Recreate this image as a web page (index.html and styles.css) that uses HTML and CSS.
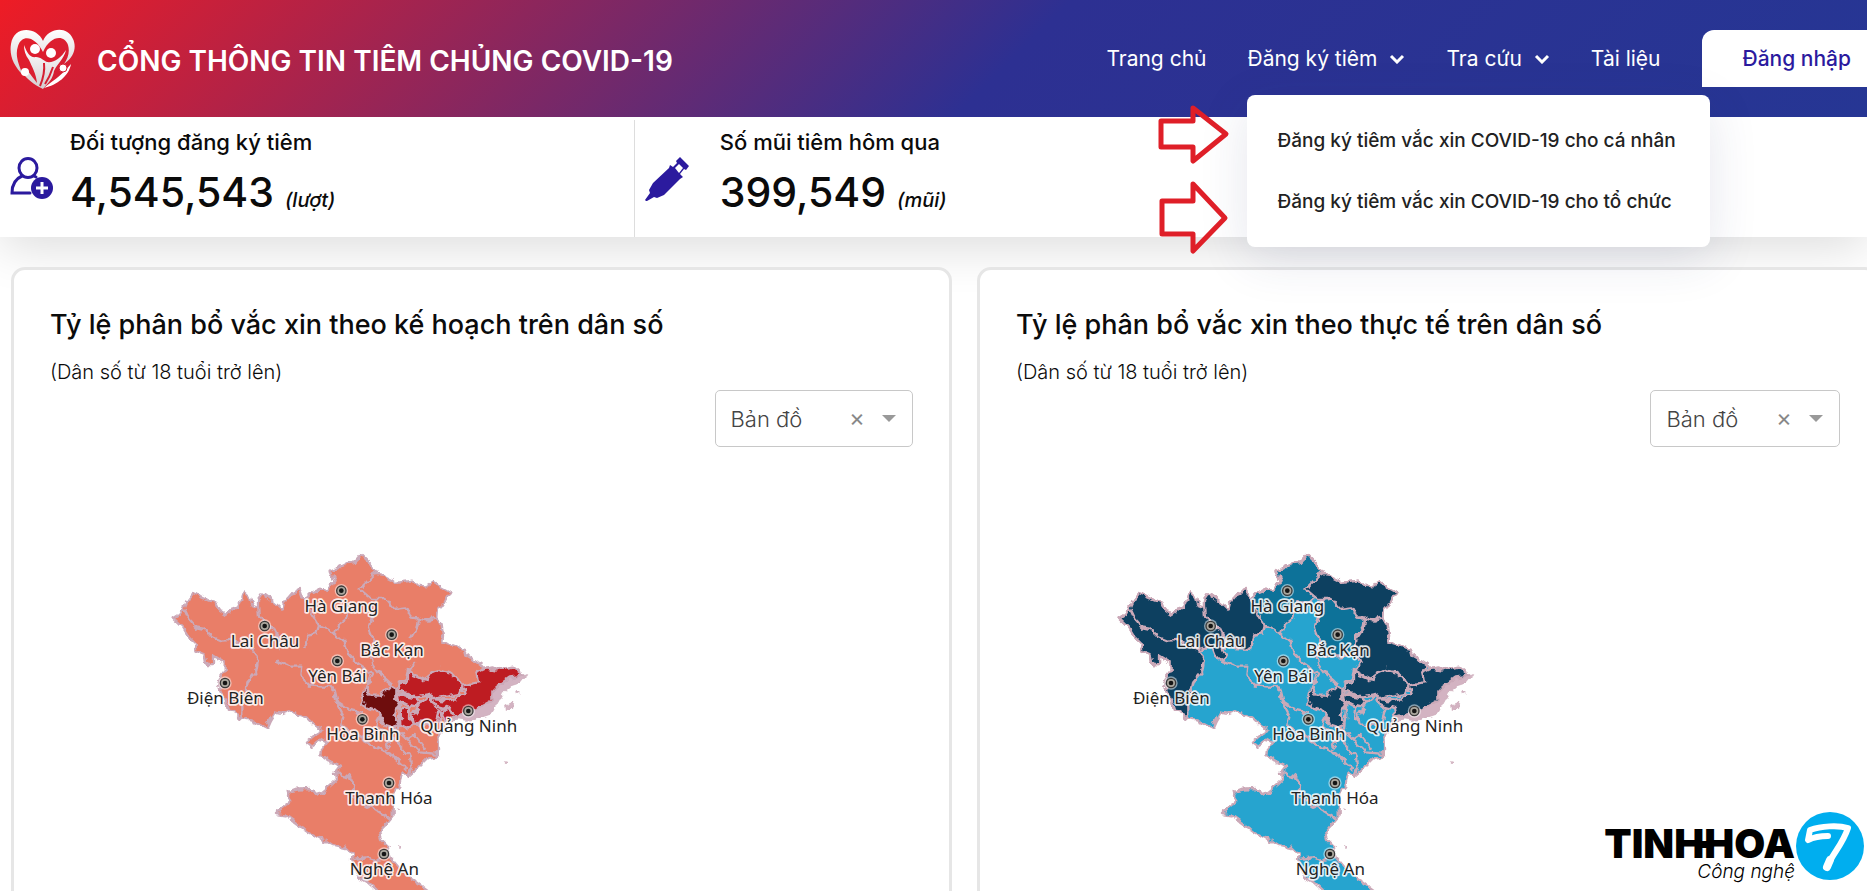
FILE: index.html
```html
<!DOCTYPE html>
<html lang="vi">
<head>
<meta charset="utf-8">
<title>Cổng thông tin tiêm chủng COVID-19</title>
<link rel="stylesheet" href="styles.css">
</head>
<body>
<svg class="defs" aria-hidden="true">
  <defs>
    <filter id="rough" x="-5%" y="-5%" width="110%" height="110%">
      <feTurbulence type="fractalNoise" baseFrequency="0.045" numOctaves="2" seed="4" result="n"/>
      <feDisplacementMap in="SourceGraphic" in2="n" scale="22" xChannelSelector="R" yChannelSelector="G"/>
    </filter>
    <linearGradient id="silver" x1="0" y1="0" x2="0" y2="1">
      <stop offset="0" stop-color="#fff"/><stop offset="1" stop-color="#d3cdd0"/>
    </linearGradient>
    <path id="land" d="M32 238L48 228L62 208L72 185L88 165L110 172L135 183L155 190L170 212L190 225L208 212L225 205L235 180L243 157L260 172L268 200L285 207L285 180L297 163L318 178L345 200L360 215L368 185L385 165L408 153L415 175L430 180L445 162L465 152L490 155L505 140L515 125L503 98L525 88L555 72L575 70L595 47L610 62L628 80L640 95L635 105L660 107L685 120L700 132L725 128L750 125L765 140L790 142L810 130L835 145L862 160L850 180L840 200L822 210L820 235L835 250L840 290L838 310L870 320L905 330L910 350L935 365L955 380L965 390L985 385L1000 392L1040 385L1060 395L1080 410L1040 415L1010 440L985 460L985 480L965 495L935 508L880 525L850 540L845 570L825 585L828 610L828 635L815 655L790 660L765 685L735 712L720 700L714 715L709 742L694 760L689 810L689 830L669 855L649 880L654 900L674 920L679 950L699 975L724 1005L764 1030L830 1080L660 1080L639 1053L614 1030L589 1015L574 985L564 960L569 948L549 930L504 920L474 900L439 880L404 855L369 830L339 825L369 800L379 775L374 758L404 752L439 750L454 765L479 760L504 740L519 725L516 702L534 680L504 670L472 648L474 630L489 608L474 600L444 622L429 610L454 590L479 575L455 560L430 535L400 525L385 515L360 525L335 520L320 545L310 568L285 555L265 545L235 540L215 520L200 518L195 500L170 450L185 440L165 440L170 415L185 395L185 372L150 350L150 375L130 375L125 345L100 335L98 312L75 290L60 265Z"/>
    <path id="coast" d="M1088 410L1070 432L1045 440L1020 462L1005 490L985 525L950 536L915 545L885 540L855 545L860 528L900 515L945 505L978 490L985 465L1010 440L1040 414L1060 400ZM1028 498L1050 488L1046 506L1030 516ZM1064 457L1072 460L1066 464ZM1024 668L1029 670L1024 674ZM704 812L710 815L704 819ZM680 922L684 924ZM710 920L714 923L710 926Z"/>
    <path id="northwest" d="M32 238L48 228L62 208L72 185L88 165L110 172L135 183L155 190L170 212L190 225L208 212L225 205L235 180L243 157L260 172L268 200L285 207L285 180L297 163L318 178L345 200L360 215L368 185L385 165L408 153L425 180L440 215L450 235L468 260L460 285L435 290L430 330L335 325L352 350L342 368L320 350L310 325L272 332L285 365L280 395L250 430L245 455L248 480L235 500V538L215 520L200 518L195 500L170 450L185 440L165 440L170 415L185 395L185 372L150 350L150 375L130 375L125 345L100 335L98 312L75 290L60 265Z"/>
    <path id="hagiang" d="M425 180L445 162L465 152L490 155L505 140L515 125L503 98L525 88L555 72L575 70L595 47L610 62L628 80L640 95L628 112L590 150L620 175L605 190L560 190L550 240L525 260L515 285L480 262L465 260L440 215Z"/>
    <path id="caobang" d="M640 105L660 107L685 120L700 132L725 128L750 125L765 140L790 142L810 130L835 145L862 160L850 180L840 200L822 210L820 238L795 245L765 235L745 235L730 205L690 210L665 180L625 180L590 150L628 112Z"/>
    <path id="backan" d="M628 190L665 180L690 210L730 205L745 235L765 238L760 265L740 290L745 345L700 352L650 352L622 345L632 310L615 270L628 230Z"/>
    <path id="langson" d="M765 238L795 245L820 238L835 250L840 290L838 310L870 320L905 330L910 350L935 365L955 380L940 400L945 430L900 440L870 400L830 390L805 400L790 425L755 405L735 395L755 370L740 340L742 300L762 270Z"/>
    <path id="bacgiang" d="M735 393L750 407L790 425L805 400L830 390L870 404L900 440L890 465L820 478L800 465L760 472L705 457L710 435L735 425Z"/>
    <path id="quangninh" d="M805 480L860 485L905 465L900 440L945 430L940 400L965 388L1000 395L1050 383L1080 410L1040 415L1005 440L985 460L985 485L940 510L880 528L860 533L855 510L810 498Z"/>
    <path id="hanoi" d="M600 455L612 447L620 470L650 470L665 460L685 440L700 450L700 480L712 500L700 510L695 530L705 555L690 568L665 560L650 530L640 515L618 508L595 490Z"/>
    <path id="bacninh" d="M705 465L760 475L772 487L757 505L730 500L708 488Z"/>
    <path id="delta" d="M710 512L738 505L738 540L752 556L732 570L712 560ZM748 530L762 508L778 485L800 465L805 492L850 508L828 540L814 562L790 550L752 552ZM828 512L852 510L880 530L846 545Z"/>
    <path id="lines" d="M62 208L75 235L100 265L125 270L150 295L175 305L205 303L272 332M285 207L288 230L300 250L330 265L345 295L352 330M342 368L375 380L415 380L412 410L440 440L510 445L520 485L560 512L600 522M520 488L542 530L535 558L600 602L640 625L690 650L735 690M515 285L545 310L555 345L580 370L632 405L610 440M622 345L628 375L650 405L685 435M735 395L728 420L705 432M468 260L460 285L435 290L430 330M620 405L605 450M650 530L640 560L690 600L665 630M690 600L740 650L745 685L735 712M695 568L735 605L770 640L828 645M730 600L755 585L790 632M712 500L705 570M742 500L738 540L752 556M800 465L778 485L748 530L752 556L814 562L828 512L805 492M516 702L560 712L570 735L570 770L600 790L650 820L680 840M569 960L610 955L650 965L679 940"/>
    <g id="pin"><circle r="20" fill="#fff" opacity=".5"/><circle r="14" fill="#aaa79e" stroke="#3a3a3a" stroke-width="4"/><circle r="7" fill="#151515"/></g>
    <g id="places" class="map-label">
      <use href="#pin" x="535" y="155"/><text x="535" y="219">Hà Giang</text>
      <use href="#pin" x="305" y="261"/><text x="306" y="324">Lai Châu</text>
      <use href="#pin" x="686" y="287"/><text x="687" y="350">Bắc Kạn</text>
      <use href="#pin" x="523" y="366"/><text x="523" y="430">Yên Bái</text>
      <use href="#pin" x="186" y="432"/><text x="187" y="495">Điện Biên</text>
      <use href="#pin" x="598" y="541"/><text x="600" y="604">Hòa Bình</text>
      <use href="#pin" x="916" y="516"/><text x="917" y="579">Quảng Ninh</text>
      <use href="#pin" x="678" y="732"/><text x="678" y="795">Thanh Hóa</text>
      <use href="#pin" x="663" y="945"/><text x="664" y="1009">Nghệ An</text>
    </g>
  </defs>
</svg>

<header class="header">
  <a class="brand" href="#">
    <svg class="brand-mark" viewBox="0 0 66 62" aria-hidden="true">
      <path fill="url(#silver)" d="M33 13C27-1 4-3 1 16C-1 28 4 38 13 47C8 35 5 27 8 18C12 6 25 8 33 24C40 8 54 6 58 17C60 24 58 30 54 36C66 28 66 17 63 11C57-3 38 0 33 13Z"/>
      <path fill="url(#silver)" d="M14 17C17 25 20 30 26 29C31 29 34 33 37 34C44 35 51 30 56 22C54 31 47 36 44 43C43 51 38 55 33 61C24 57 16 50 12 44L17 42C21 47 24 51 27 55C26 45 22 39 19 32C15 27 14 22 14 17Z"/>
      <path fill="none" stroke="#d51f32" stroke-width="2" d="M34 35C35 44 33 51 30 58M35 56C39 50 41 45 43 39"/>
      <path fill="#fff" d="M34 60C42 53 49 50 61 36C59 48 47 57 34 60Z"/>
      <circle cx="25" cy="21" r="5" fill="#fff"/><circle cx="41" cy="25" r="5" fill="#fff"/>
      <circle cx="15" cy="44" r="4" fill="#fff"/><circle cx="53" cy="40" r="4" fill="#fff" stroke="#d51f32"/>
    </svg>
    <span class="brand-name">CỔNG THÔNG TIN TIÊM CHỦNG COVID-19</span>
  </a>
  <nav class="nav">
    <a href="#">Trang chủ</a>
    <div class="nav-item">
      <button type="button" class="nav-toggle">Đăng ký tiêm <svg class="chevron" viewBox="0 0 16 10" aria-hidden="true"><path d="M2 2l6 6 6-6"/></svg></button>
      <div class="menu">
        <a href="#">Đăng ký tiêm vắc xin COVID-19 cho cá nhân</a>
        <a href="#">Đăng ký tiêm vắc xin COVID-19 cho tổ chức</a>
        <svg class="arrows" viewBox="0 0 70 152" aria-hidden="true"><path d="M2 26h32V13l33 26-33 27V52H2zM3 106h31V89l32 34-32 33v-17H3z"/></svg>
      </div>
    </div>
    <button type="button" class="nav-toggle">Tra cứu <svg class="chevron" viewBox="0 0 16 10" aria-hidden="true"><path d="M2 2l6 6 6-6"/></svg></button>
    <a href="#">Tài liệu</a>
    <button type="button" class="login">Đăng nhập</button>
  </nav>
</header>

<section class="stats">
  <div class="stat">
    <svg class="stat-icon" viewBox="0 0 44 44" aria-hidden="true">
      <g fill="none" stroke="#2b1a9e" stroke-width="3" stroke-linecap="round"><ellipse cx="18" cy="11" rx="9" ry="9.500"/><path d="M12 19C5 22 2 29 2 36H20M24 19l2 1"/></g>
      <circle cx="32" cy="31" r="11" fill="#2b1a9e"/><path stroke="#fff" stroke-width="3" d="M32 25v12M26 31h12"/>
    </svg>
    <div><p class="stat-label">Đối tượng đăng ký tiêm</p><p class="stat-value">4,545,543 <em>(lượt)</em></p></div>
  </div>
  <div class="stat stat-wide">
    <svg class="stat-icon" viewBox="0 0 44 44" aria-hidden="true">
      <path fill="#2b1a9e" d="M25 8l3 2 4-4-1-2 4-4 9 9-3 4-2-1-4 5 3 3-3 2-16 16-7 3-3-1-7 4-1 0-1-1 5-7-1-3 4-7L24 11z"/><path fill="#fff" d="M30 11l4-4 4 4-4 5z"/>
    </svg>
    <div><p class="stat-label">Số mũi tiêm hôm qua</p><p class="stat-value">399,549 <em>(mũi)</em></p></div>
  </div>
</section>

<main class="cards">
  <section class="card">
    <h2>Tỷ lệ phân bổ vắc xin theo kế hoạch trên dân số</h2>
    <p class="note">(Dân số từ 18 tuổi trở lên)</p>
    <div class="picker">
      <select aria-label="Kiểu hiển thị kế hoạch"><option>Bản đồ</option></select>
      <button type="button" class="clear" aria-label="Xóa">×</button>
      <svg class="caret" viewBox="0 0 14 7" aria-hidden="true"><path d="M0 0h14L7 7z"/></svg>
    </div>
    <svg class="map" viewBox="0 0 1914 1053" role="img" aria-label="Bản đồ phân bổ theo kế hoạch">
      <g class="regions plan" filter="url(#rough)">
        <use href="#coast" class="sea"/><use href="#land"/>
        <g class="high"><use href="#bacgiang"/><use href="#quangninh"/><use href="#bacninh"/><use href="#delta"/></g>
        <use href="#hanoi" class="top"/>
        <path class="edge" d="M425 180L440 215L468 260L480 262L515 285L525 260L550 240L560 190M640 95L628 112L590 150L625 180L665 180L690 210L730 205L745 235L765 238L795 245L820 238M628 190L628 230L615 270L632 310L622 345M765 238L760 268L742 300M735 395L755 370M272 332L285 365L280 395L250 430L248 480L235 500V538"/>
        <use href="#lines" class="edge"/>
      </g>
      <use href="#places"/>
    </svg>
  </section>
  <section class="card">
    <h2>Tỷ lệ phân bổ vắc xin theo thực tế trên dân số</h2>
    <p class="note">(Dân số từ 18 tuổi trở lên)</p>
    <div class="picker">
      <select aria-label="Kiểu hiển thị thực tế"><option>Bản đồ</option></select>
      <button type="button" class="clear" aria-label="Xóa">×</button>
      <svg class="caret" viewBox="0 0 14 7" aria-hidden="true"><path d="M0 0h14L7 7z"/></svg>
    </div>
    <svg class="map" viewBox="0 0 1914 1053" role="img" aria-label="Bản đồ phân bổ theo thực tế">
      <g class="regions actual" filter="url(#rough)">
        <use href="#coast" class="sea"/><use href="#land"/>
        <g class="high"><use href="#hagiang"/><use href="#backan"/></g>
        <g class="top"><use href="#northwest"/><use href="#caobang"/><use href="#langson"/><use href="#bacgiang"/><use href="#quangninh"/><use href="#bacninh"/><use href="#hanoi"/></g>
        <use href="#lines" class="edge"/>
      </g>
      <use href="#places"/>
    </svg>
  </section>
</main>

<aside class="watermark">
  <div class="watermark-text"><strong>TINHHOA</strong><em>Công nghệ</em></div>
  <svg class="watermark-mark" viewBox="0 0 70 70" aria-hidden="true">
    <circle cx="35" cy="35" r="34" fill="#00aeef"/>
    <path fill="none" stroke="#fff" stroke-width="6" stroke-linecap="round" stroke-linejoin="round" d="M33 25C23 25 17 27 13 29L15 19C26 15 43 14 53 17C48 32 40 40 35 50"/>
    <path fill="none" stroke="#fff" stroke-width="8" stroke-linecap="round" d="M35 49L32 56"/>
  </svg>
</aside>
</body>
</html>
```
FILE: styles.css
```css
* { box-sizing: border-box; }
body { margin: 0; height: 100vh; overflow: hidden; position: relative; background: #fff; color: #0b0b0b; font-family: Inter, "Noto Sans", sans-serif; }
p, h2 { margin: 0; }
a { color: inherit; text-decoration: none; }
button, select { font: inherit; color: inherit; }
.defs { position: absolute; width: 0; height: 0; }

.header { position: relative; z-index: 2; display: flex; justify-content: space-between; align-items: center; height: 117px; padding-left: 10px; color: #fff; background: linear-gradient(135deg, #ee1c25 0%, #2d3092 54%, #263694 100%); }
.brand { display: flex; align-items: center; gap: 21px; }
.brand-mark { width: 66px; height: 62px; }
.brand-name { padding-top: 4px; font-size: 28px; font-weight: 600; }
.nav { display: flex; align-items: center; gap: 41px; font-size: 21px; }
.nav-item { position: relative; }
.nav-toggle { display: flex; align-items: center; gap: 12px; padding: 0; border: 0; background: none; }
.chevron { width: 16px; height: 10px; fill: none; stroke: #fff; stroke-width: 3; }
.login { height: 57px; padding: 0 16px 0 41px; border: 0; border-radius: 12px 0 0 0; background: #fff; color: #2b1a9e; font-weight: 500; }
.menu { position: absolute; top: 49px; left: 0; display: flex; flex-direction: column; gap: 36px; padding: 33px 34px 33px 30px; border-radius: 8px; background: #fff; color: #222; font-size: 19px; font-weight: 500; line-height: 25px; white-space: nowrap; box-shadow: 0 12px 50px rgba(40, 50, 110, .12); }
.arrows { position: absolute; top: 0; right: 100%; width: 70px; height: 152px; margin-right: 18px; overflow: visible; fill: none; stroke: #df1f28; stroke-width: 5; stroke-linejoin: round; }

.stats { position: relative; display: flex; height: 120px; padding-top: 3px; background: #fff; box-shadow: 0 10px 50px rgba(0, 0, 0, .14); }
.stat { flex: 0 0 34%; display: flex; align-items: center; gap: 16px; padding: 0 10px; border-right: 1px solid #ddd; }
.stat-wide { gap: 31px; border: 0; }
.stat-icon { flex: none; width: 44px; height: 44px; }
.stat-label { font-size: 22px; font-weight: 500; line-height: 28px; }
.stat-value { margin: 12px 0 6px; font-size: 41px; font-weight: 500; line-height: 48px; }
.stat-value em { font-size: 20px; }

.cards { position: relative; display: grid; grid-template-columns: 941fr 902fr; gap: 25px; margin: 30px -12px 0 11px; }
.card { padding: 35px 36px; border: 3px solid #e6e6e6; border-radius: 14px; background: #fff; }
.card h2 { font-size: 27px; font-weight: 500; line-height: 40px; }
.note { margin-top: 13px; font-size: 20px; font-weight: 300; line-height: 28px; }
.picker { position: relative; width: 23%; margin: 4px 0 0 auto; color: #444; }
.picker select { display: block; width: 100%; height: 57px; padding: 0 15px; border: 1px solid #c8c8c8; border-radius: 5px; background: #fff; appearance: none; font-size: 22px; font-weight: 300; }
.clear { position: absolute; top: 14px; right: 48px; padding: 0; border: 0; background: none; color: #888; font-size: 24px; line-height: 28px; }
.caret { position: absolute; top: 25px; right: 17px; width: 14px; height: 7px; fill: #999; }
.map { display: block; width: 638px; margin: 92px auto 0; }
.regions { stroke: #cba9b8; stroke-width: 7; stroke-linejoin: round; }
.regions .edge { fill: none; }
.regions .sea { fill: #d3b3c2; stroke-width: 2; }
.plan { fill: #e97e68; }
.plan .high { fill: #be1a20; }
.plan .top { fill: #6e0d10; }
.actual { fill: #26a4cf; }
.actual .high { fill: #0c7299; }
.actual .top { fill: #0d4061; }
.map-label { font-family: "Noto Sans", sans-serif; font-size: 51px; text-anchor: middle; fill: #222; }
.map-label text { stroke: #fff; stroke-width: 10; stroke-opacity: .85; paint-order: stroke; stroke-linejoin: round; }

.watermark { position: absolute; right: 2px; bottom: 9px; display: flex; align-items: center; color: #000; }
.watermark-text { display: flex; flex-direction: column; align-items: flex-end; padding-top: 16px; }
.watermark strong { position: relative; font-size: 40px; font-weight: 900; line-height: 36px; }
.watermark strong::after { content: ""; position: absolute; left: 49%; top: 15px; width: 14px; height: 7px; background: #000; }
.watermark em { font-size: 19px; line-height: 20px; font-weight: 300; }
.watermark-mark { width: 70px; height: 70px; }
```
